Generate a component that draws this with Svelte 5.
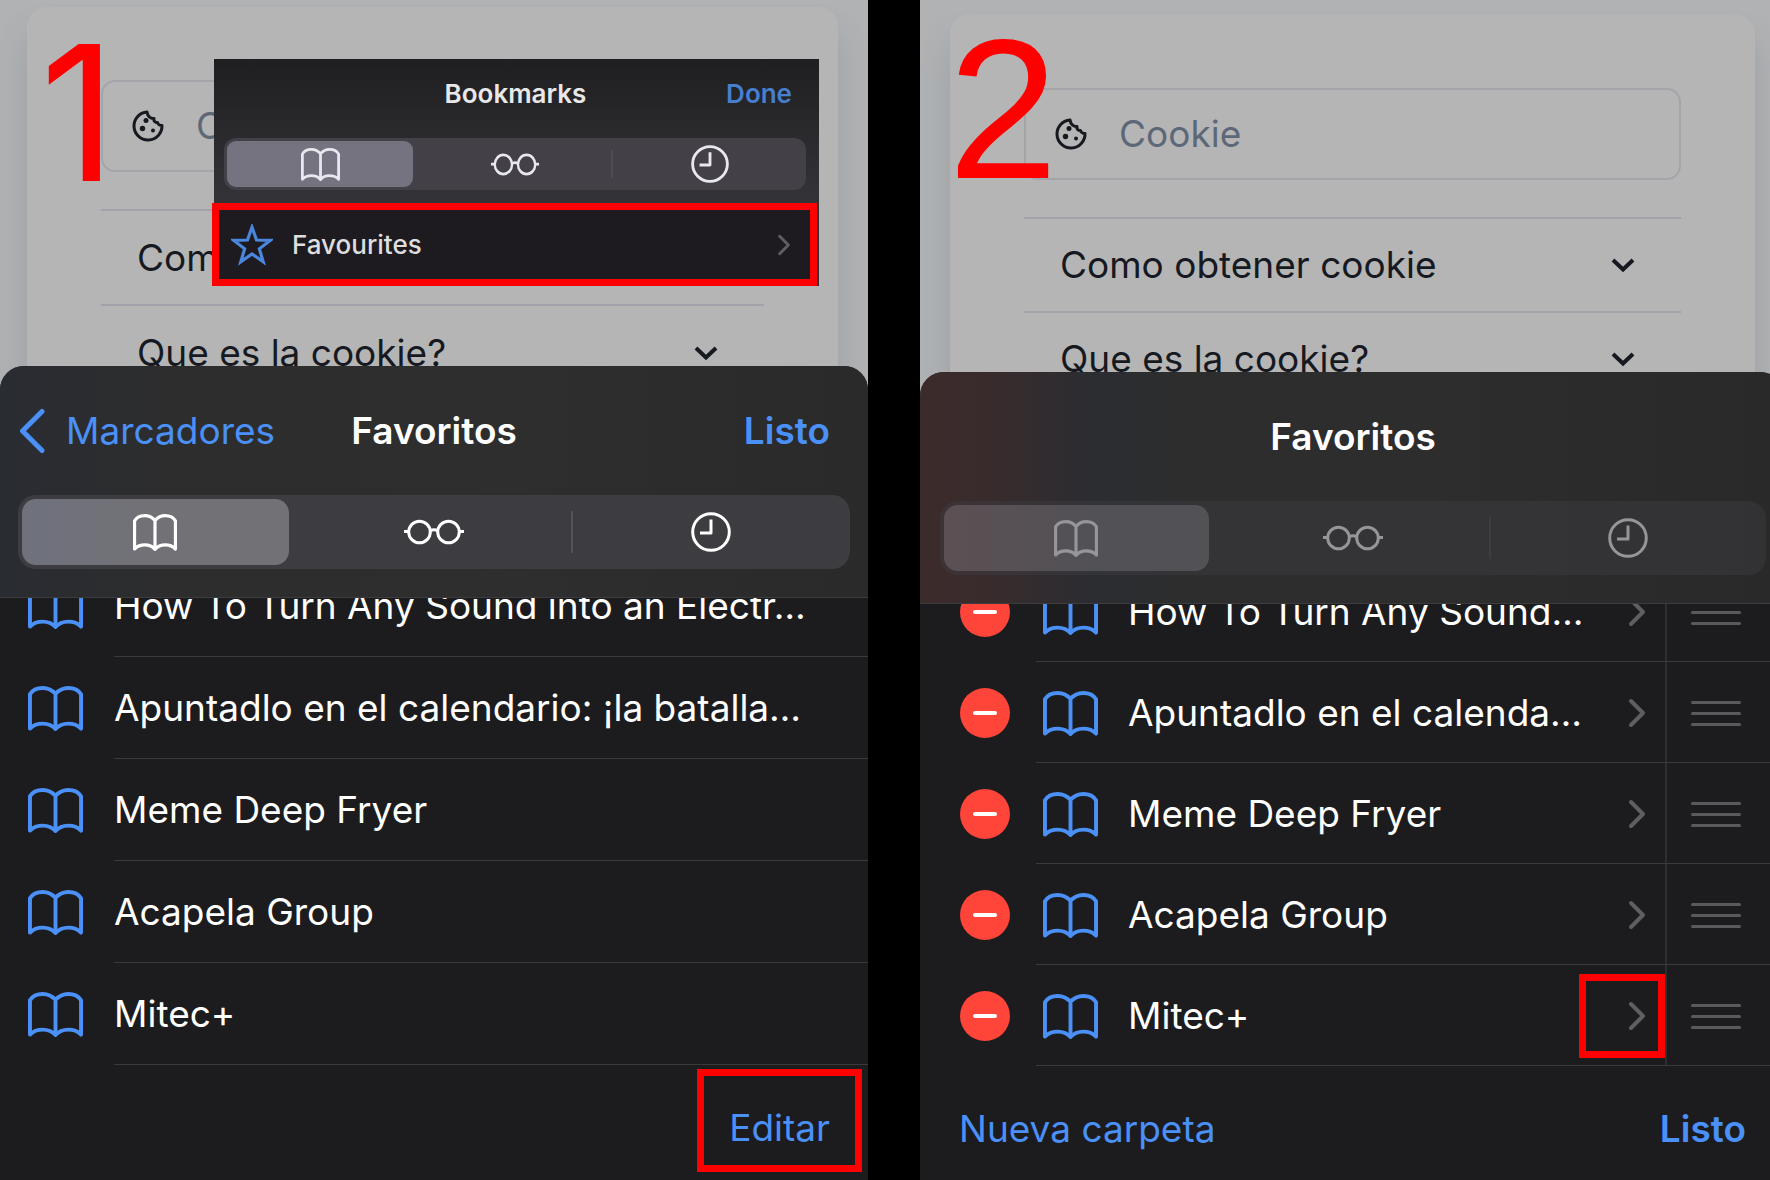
<script>
  const questions = ['Como obtener cookie', 'Que es la cookie?'];

  const browse = [
    'How To Turn Any Sound into an Electr…',
    'Apuntadlo en el calendario: ¡la batalla…',
    'Meme Deep Fryer',
    'Acapela Group',
    'Mitec+'
  ];

  const editable = [
    { title: 'How To Turn Any Sound…' },
    { title: 'Apuntadlo en el calenda…' },
    { title: 'Meme Deep Fryer' },
    { title: 'Acapela Group' },
    { title: 'Mitec+', marked: true }
  ];
</script>

{#snippet book()}
  <svg class="book" viewBox="0 0 56 46" preserveAspectRatio="none" aria-hidden="true">
    <path d="M28 8C24.500 4 20 2 15 2 9.500 2 4.500 4.200 2 8.500V43.500C5 40.500 10 38.500 15 38.500c5 0 10 2 13 5.500 3-3.500 8-5.500 13-5.500 5 0 10 2 13 5V8.500C51.500 4.200 46.500 2 41 2 36 2 31.500 4 28 8V44" />
  </svg>
{/snippet}

{#snippet glasses()}
  <svg class="glasses" viewBox="0 0 60 26" preserveAspectRatio="none" aria-hidden="true">
    <circle cx="15.500" cy="13" r="10.800" /><circle cx="44.500" cy="13" r="10.800" />
    <path d="M0 12.500h4.500M55.500 12.500H60M26 12c2.500-1.500 5.500-1.500 8 0" />
  </svg>
{/snippet}

{#snippet clock()}
  <svg class="clock" viewBox="0 0 40 40" preserveAspectRatio="none" aria-hidden="true">
    <circle cx="20" cy="20" r="18.300" /><path d="M20 7.500V21H9" />
  </svg>
{/snippet}

{#snippet segments()}
  <div class="segments" role="group" aria-label="Secciones">
    <button class="segment active" aria-label="Marcadores">{@render book()}</button>
    <button class="segment" aria-label="Lista de lectura">{@render glasses()}</button>
    <button class="segment divided" aria-label="Historial">{@render clock()}</button>
  </div>
{/snippet}

{#snippet webpage(id)}
  <div class="webpage">
    <div class="card">
      <div class="field">
        <svg viewBox="0 0 32 32" aria-hidden="true">
          <path class="rim" d="M15 2A14 14 0 1 0 30 15.500C27.500 15.500 26 14.500 25.500 12.500 23 12.500 21.500 11 22 8.500 19 9 15.500 6.500 15 2Z" />
          <circle cx="14" cy="10.500" r="2.500" /><circle cx="10.500" cy="18.500" r="2.700" /><circle cx="21" cy="20.500" r="2" />
        </svg>
        <input {id} type="text" placeholder="Cookie" aria-label="Cookie" />
      </div>
      <div class="faq">
        {#each questions as question}
          <button class="question">
            <span>{question}</span>
            <svg viewBox="0 0 24 16" aria-hidden="true"><path d="M2 3l10 9.500L22 3" /></svg>
          </button>
        {/each}
      </div>
    </div>
  </div>
{/snippet}

<main>
  <section class="phone first">
    {@render webpage('cookie-1')}
    <span class="step one">1</span>

    <aside class="inset">
      <header>
        <h2>Bookmarks</h2>
        <button class="strong">Done</button>
      </header>
      {@render segments()}
      <button class="favourites">
        <svg class="star" viewBox="0 0 40 40" aria-hidden="true"><path d="M20 3l4.300 12.300 13 .3-10.300 8 3.700 12.400L20 28.500 9.300 36 13 23.600l-10.300-8 13-.3z" /></svg>
        <span>Favourites</span>
        <svg class="chevron" viewBox="0 0 18 30" aria-hidden="true"><path d="M3 3l12 12L3 27" /></svg>
      </button>
    </aside>

    <div class="sheet">
      <header class="bar">
        <div class="titles">
          <button class="back">
            <svg viewBox="0 0 28 46" aria-hidden="true"><path d="M24 3.500L4.500 23 24 42.500" /></svg>
            Marcadores
          </button>
          <h1>Favoritos</h1>
          <button class="strong">Listo</button>
        </div>
        {@render segments()}
      </header>
      <ul>
        {#each browse as title}
          <li>
            {@render book()}
            <a href="#top">{title}</a>
          </li>
        {/each}
      </ul>
      <footer>
        <button class="edit">Editar</button>
      </footer>
    </div>
  </section>

  <section class="phone second">
    {@render webpage('cookie-2')}
    <span class="step two">2</span>

    <div class="sheet">
      <header class="bar">
        <div class="titles">
          <h1>Favoritos</h1>
        </div>
        {@render segments()}
      </header>
      <ul>
        {#each editable as item}
          <li>
            <button class="remove" aria-label="Eliminar {item.title}"></button>
            <div class="entry">
              {@render book()}
              <span class="name">{item.title}</span>
              <button class="open" class:marked={item.marked} aria-label="Abrir {item.title}">
                <svg class="chevron" viewBox="0 0 18 30" aria-hidden="true"><path d="M3 3l12 12L3 27" /></svg>
              </button>
              <button class="grip" aria-label="Mover {item.title}"><i></i><i></i><i></i></button>
            </div>
          </li>
        {/each}
      </ul>
      <footer>
        <button>Nueva carpeta</button>
        <button class="strong">Listo</button>
      </footer>
    </div>
  </section>
</main>

<style>
  :global(body) {
    margin: 0;
    background: #000;
  }

  main {
    display: grid;
    grid-template-columns: 868fr 850fr;
    gap: 52px;
    min-height: 100vh;
    overflow: hidden;
    background: #000;
    color: #fff;
    font: 400 37px/48px Inter, "Liberation Sans", sans-serif;
  }

  button {
    padding: 0;
    border: 0;
    background: none;
    color: #4a90f7;
    font: inherit;
    cursor: pointer;
  }

  svg {
    display: block;
    flex: none;
    fill: none;
    stroke: currentColor;
    stroke-linejoin: round;
  }

  h1,
  h2 {
    margin: 0;
    font-size: inherit;
    font-weight: 600;
  }

  .strong {
    font-weight: 600;
  }

  .phone {
    position: relative;
    display: flex;
    flex-direction: column;
    min-width: 0;
    overflow: hidden;
  }

  /* Dimmed web page behind the sheet */
  .webpage {
    box-sizing: border-box;
    height: 396px;
    padding: 7px 30px 0 27px;
    overflow: hidden;
    background: #b0b2b4;
    color: #16191f;
  }

  .second .webpage {
    height: 402px;
    padding: 14px 15px 0 30px;
  }

  .card {
    box-sizing: border-box;
    height: 480px;
    padding: 73px 74px;
    border-radius: 20px;
    background: #b5b5b5;
    box-shadow: 0 26px 30px rgba(100, 112, 120, 0.25);
  }

  .second .card {
    padding-top: 74px;
  }

  .field {
    display: flex;
    align-items: center;
    gap: 32px;
    box-sizing: border-box;
    height: 92px;
    padding: 0 29px;
    border: 2px solid #a4a5ab;
    border-radius: 14px;
  }

  .field svg {
    width: 32px;
    height: 32px;
    fill: currentColor;
    stroke: none;
  }

  .field .rim {
    fill: none;
    stroke: currentColor;
    stroke-width: 3;
  }

  input {
    flex: 1;
    min-width: 0;
    padding: 0;
    border: 0;
    background: none;
    color: #16191f;
    font: inherit;
  }

  input::placeholder {
    color: #5c6878;
    opacity: 1;
  }

  .faq {
    margin-top: 37px;
  }

  .question {
    display: flex;
    align-items: center;
    justify-content: space-between;
    box-sizing: border-box;
    width: 100%;
    height: 95px;
    padding: 0 46px 0 36px;
    border-top: 2px solid #a2a3aa;
    color: #16191f;
  }

  .second .question {
    height: 94px;
  }

  .question svg {
    width: 24px;
    height: 16px;
    stroke-width: 4;
    stroke-linejoin: miter;
  }

  .step {
    position: absolute;
    color: #f00;
    line-height: 192px;
  }

  .one {
    top: 17px;
    left: 40px;
    font-size: 188px;
  }

  .two {
    top: 14px;
    left: 28px;
    font-family: "Liberation Sans", Arial, sans-serif;
    font-size: 198px;
  }

  /* Segmented control */
  .segments {
    display: grid;
    grid-template-columns: repeat(3, 1fr);
    box-sizing: border-box;
    height: 74px;
    padding: 4px;
    border-radius: 18px;
    background: #3d3c41;
  }

  .segment {
    position: relative;
    display: grid;
    place-items: center;
    border-radius: 14px;
    color: #fff;
  }

  .segment.active {
    margin-right: 8px;
    background: linear-gradient(90deg, #6f717d, #727176 50%);
  }

  .divided {
    padding-left: 4px;
  }

  .divided::before {
    content: "";
    position: absolute;
    top: 12px;
    bottom: 12px;
    left: 0;
    width: 2px;
    background: #535257;
  }

  .segment svg {
    stroke-width: 3;
  }

  .segment .book {
    width: 44px;
    height: 37px;
    stroke-width: 4;
  }

  .glasses {
    width: 60px;
    height: 26px;
  }

  .clock {
    width: 40px;
    height: 40px;
  }

  /* Bookmarks sheet */
  .sheet {
    position: relative;
    display: flex;
    flex: 1;
    flex-direction: column;
    margin-top: -30px;
    border-radius: 24px 24px 0 0;
    background: #1c1c1e;
    overflow: hidden;
  }

  .second .sheet {
    margin-right: -14px;
  }

  .bar {
    position: relative;
    z-index: 1;
    box-sizing: border-box;
    height: 232px;
    padding: 0 18px;
    border-bottom: 1px solid #3c3c3e;
    background: linear-gradient(90deg, #292c32, #2d2d2d 22%, #2e2e2e 60%, #2a2a2a);
  }

  .titles {
    display: grid;
    grid-template-columns: 1fr auto 1fr;
    align-items: center;
    height: 129px;
  }

  .titles h1 {
    grid-column: 2;
  }

  .titles .strong {
    justify-self: end;
    margin-right: 20px;
  }

  .back {
    display: flex;
    align-items: center;
    gap: 20px;
    justify-self: start;
  }

  .back svg {
    width: 28px;
    height: 46px;
    stroke-width: 5;
    stroke-linecap: round;
  }

  .second .bar {
    padding: 0 18px 0 20px;
    background: linear-gradient(90deg, #3c2b2b, #392b2c 8%, #2b2d32 20%, #2d2d2d 32%, #2d2d2d 60%, #292929);
  }

  .second .segments {
    background: rgba(60, 59, 65, 0.5);
  }

  .second .segment {
    color: #96969a;
  }

  .second .active {
    background: linear-gradient(90deg, #5c5054, #515156 60%);
  }

  .second .divided::before {
    background: #3e3e42;
  }

  ul {
    margin: -43px 0 0;
    padding: 0;
    list-style: none;
  }

  li {
    display: flex;
    align-items: center;
    box-sizing: border-box;
    height: 102px;
    padding-left: 28px;
  }

  li .book {
    width: 55px;
    height: 45px;
    color: #4a90f7;
    stroke-width: 4;
  }

  li a {
    flex: 1;
    box-sizing: border-box;
    min-width: 0;
    height: 102px;
    margin-left: 31px;
    border-bottom: 1px solid #3a3a3c;
    color: #fff;
    line-height: 102px;
    text-decoration: none;
    white-space: nowrap;
  }

  .second li {
    height: 101px;
    padding-left: 40px;
  }

  .remove {
    display: grid;
    flex: none;
    place-items: center;
    width: 50px;
    height: 50px;
    margin-right: 26px;
    border-radius: 50%;
    background: #ff453a;
  }

  .remove::before {
    content: "";
    width: 24px;
    height: 4px;
    border-radius: 2px;
    background: #fff;
  }

  .entry {
    display: flex;
    flex: 1;
    align-items: center;
    box-sizing: border-box;
    min-width: 0;
    height: 101px;
    padding: 2px 0 0 7px;
    border-bottom: 1px solid #3a3a3c;
  }

  .name {
    flex: 1;
    min-width: 0;
    margin-left: 30px;
    white-space: nowrap;
  }

  .open {
    display: flex;
    flex: none;
    align-items: center;
    justify-content: flex-end;
    box-sizing: border-box;
    width: 86px;
    height: 84px;
    padding-right: 12px;
    border: 7px solid transparent;
  }

  .open.marked {
    border-color: #f00;
  }

  .chevron {
    width: 18px;
    height: 30px;
    color: #5f5f62;
    stroke-width: 4;
    stroke-linecap: round;
  }

  .grip {
    display: flex;
    flex: none;
    flex-direction: column;
    align-self: stretch;
    justify-content: center;
    gap: 8px;
    box-sizing: border-box;
    width: 119px;
    margin-top: -2px;
    padding: 2px 0 0 24px;
    border-left: 2px solid #2f2f31;
  }

  .grip i {
    width: 50px;
    height: 3px;
    border-radius: 2px;
    background: #5a5a5d;
  }

  footer {
    display: flex;
    flex: 1 0 auto;
    align-items: center;
    justify-content: space-between;
    box-sizing: border-box;
    min-height: 114px;
    padding: 12px 38px 0 39px;
  }

  .first footer {
    align-items: flex-start;
    justify-content: flex-end;
    padding: 4px 6px 0;
  }

  .edit {
    box-sizing: border-box;
    height: 103px;
    padding: 14px 25px 0 25px;
    border: 7px solid #f00;
  }

  /* Floating bookmarks excerpt */
  .inset {
    position: absolute;
    top: 59px;
    left: 212px;
    box-sizing: border-box;
    width: 607px;
    font-size: 26px;
    line-height: 34px;
    background: linear-gradient(#1f1f21, #333237 60%) 2px 0 no-repeat;
    color: #e8e8ea;
  }

  .inset header {
    display: grid;
    grid-template-columns: 1fr auto 1fr;
    align-items: center;
    height: 70px;
    padding: 0 27px;
  }

  .inset h2 {
    grid-column: 2;
  }

  .inset .strong {
    justify-self: end;
    margin: 0;
    color: #477fd0;
  }

  .inset .segments {
    height: 52px;
    margin: 9px 13px 13px 12px;
    padding: 3px;
    border-radius: 12px;
    background: #434147;
  }

  .inset .segment {
    border-radius: 9px;
    color: #e8e8ee;
  }

  .inset .segment svg {
    stroke-width: 3;
  }

  .inset .segment .book {
    width: 39px;
    height: 33px;
    stroke-width: 4;
  }

  .inset .active {
    margin-right: 6px;
    background: #757380;
  }

  .inset .divided {
    padding-left: 5px;
  }

  .inset .glasses {
    width: 48px;
    height: 23px;
  }

  .inset .clock {
    width: 38px;
    height: 38px;
  }

  .inset .divided::before {
    top: 9px;
    bottom: 9px;
    background: #4e4c53;
  }

  .favourites {
    display: flex;
    align-items: center;
    box-sizing: border-box;
    width: 605px;
    height: 83px;
    padding: 0 19px 0 12px;
    border: 7px solid #f00;
    background: #1d1b20;
    color: #dededf;
    font-weight: 500;
  }

  .favourites span {
    margin: 0 auto 0 19px;
  }

  .star {
    width: 42px;
    height: 42px;
    color: #4a86dd;
    stroke-width: 3;
    stroke-linejoin: miter;
  }

  .favourites .chevron {
    width: 14px;
    height: 22px;
  }
</style>
